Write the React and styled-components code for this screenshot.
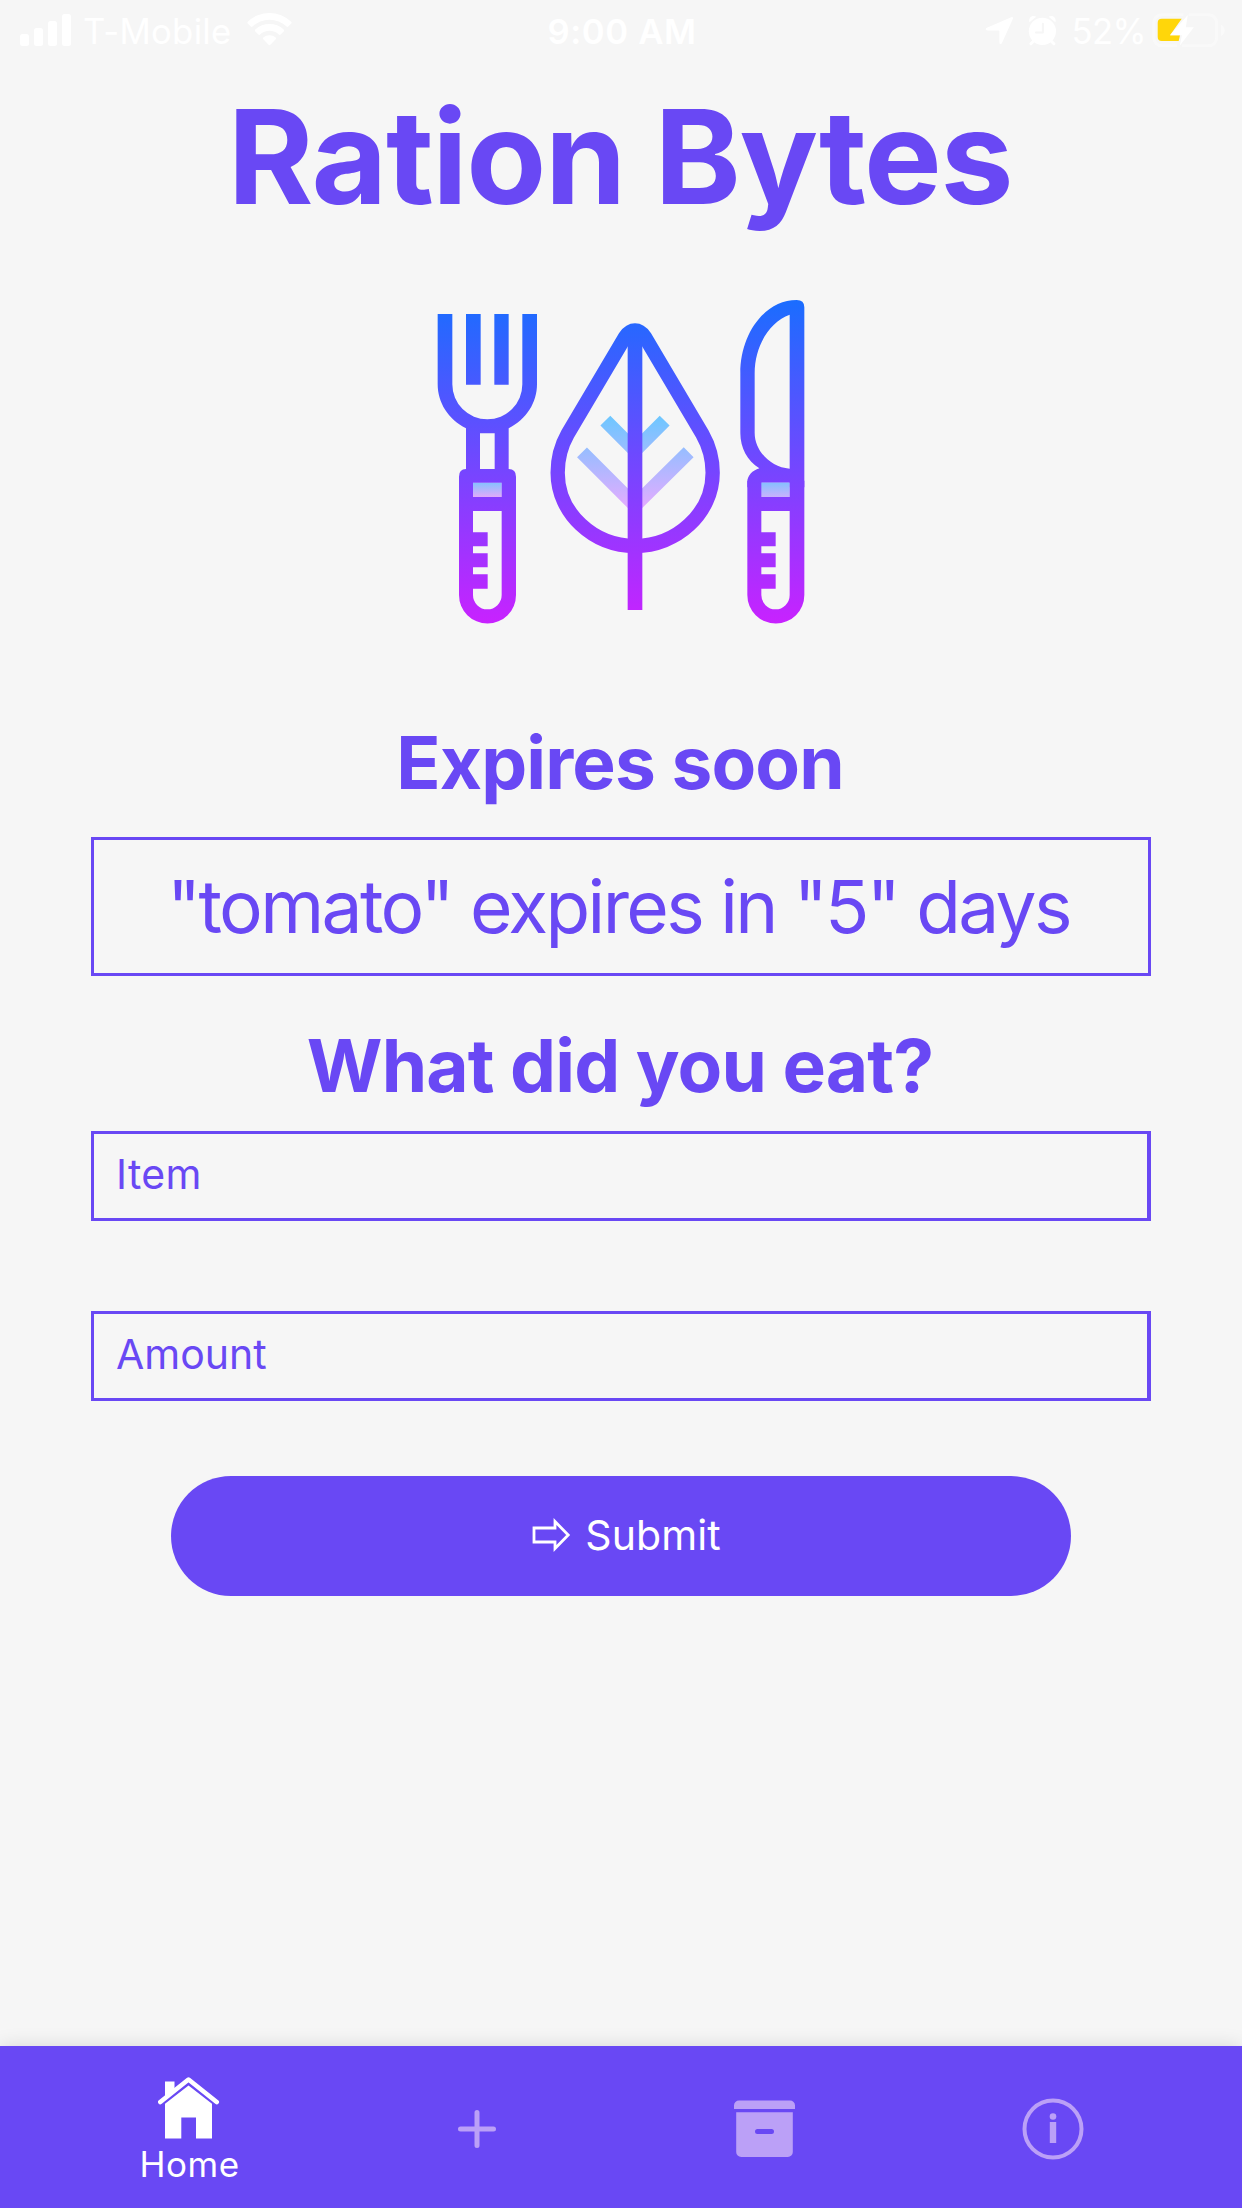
import React from "react";
import styled, { createGlobalStyle } from "styled-components";

const PURPLE = "#6948f4";
const PAPER = "#f6f6f6";

const GlobalStyle = createGlobalStyle`
  * { box-sizing: border-box; }
  body {
    margin: 0;
    background: ${PAPER};
    font-family: Inter, "Liberation Sans", sans-serif;
  }
`;

const Screen = styled.div`
  display: flex;
  flex-direction: column;
  width: 1242px;
  height: 2208px;
  overflow: hidden;
  background: ${PAPER};
  color: ${PURPLE};
`;

const StatusBar = styled.header`
  display: grid;
  grid-template-columns: 1fr auto 1fr;
  height: 60px;
  padding: 0 16px 0 20px;
  color: #fff;
`;

const StatusGroup = styled.div`
  display: flex;
  align-items: flex-start;
  justify-content: ${(p) => p.$align || "flex-start"};

  svg { display: block; flex: none; }
`;

const StatusIcons = styled.div`
  display: flex;
  gap: 14px;
`;

const StatusText = styled.span`
  padding-top: 1px;
  margin: ${(p) => p.$margin || 0};
  font-size: 34.7px;
  line-height: 60px;
  font-weight: ${(p) => p.$weight || 400};
  letter-spacing: ${(p) => p.$tracking || 0}px;
  white-space: nowrap;
`;

const Content = styled.main`
  display: flex;
  flex: 1;
  flex-direction: column;
  align-items: center;
  padding: 16px 91px 0;
`;

const Title = styled.h1`
  margin: 0 2px 0 0;
  font-size: 130.6px;
  line-height: 161px;
  font-weight: 700;
  letter-spacing: -1.4px;
  white-space: nowrap;
`;

const Logo = styled.svg`
  display: block;
  width: 400px;
  height: 360px;
  margin: 43px 2px 0 0;
`;

const SectionTitle = styled.h2`
  margin: ${(p) => p.$top}px 2px 0 0;
  font-size: 73px;
  line-height: 91px;
  font-weight: 700;
  letter-spacing: -0.86px;
  white-space: nowrap;
`;

const Notice = styled.p`
  display: flex;
  align-items: center;
  justify-content: center;
  width: 100%;
  height: 139px;
  margin: 29px 0 0;
  padding-right: 5px;
  border: 3px solid ${PURPLE};
  font-size: 73px;
  letter-spacing: -2.6px;
  white-space: nowrap;
`;

const Fields = styled.div`
  display: flex;
  flex-direction: column;
  gap: 90px;
  width: 100%;
  margin-top: 20px;
`;

const Field = styled.div`
  display: flex;
  align-items: center;
  height: 90px;
  padding: 0 22px 4px;
  border: 3px solid ${PURPLE};
  border-right-width: 4px;
  font-size: 41px;
  letter-spacing: ${(p) => p.$tracking || 0}px;
`;

const SubmitButton = styled.button`
  display: flex;
  align-items: center;
  justify-content: center;
  width: 900px;
  height: 120px;
  margin: 75px 0 0;
  padding: 0 0 2px;
  border: 0;
  border-radius: 60px;
  background: ${PURPLE};
  color: #fff;
  font: 400 41px Inter, "Liberation Sans", sans-serif;
  letter-spacing: 0.1px;
`;

const TabBar = styled.nav`
  display: flex;
  justify-content: center;
  height: 162px;
  padding: 0 45px;
  background: ${PURPLE};
  box-shadow: 0 0 18px rgba(0, 0, 0, 0.13);
`;

const Tab = styled.div`
  display: flex;
  flex: 1;
  flex-direction: column;
  align-items: center;
  justify-content: ${(p) => (p.$active ? "flex-start" : "center")};
  padding: ${(p) => (p.$active ? 31 : 4)}px 1px 0 0;
  color: ${(p) => (p.$active ? "#fff" : "#bba0f7")};

  svg { display: block; }
`;

const TabLabel = styled.span`
  margin: 4px 0 0 2px;
  font-size: 35px;
  line-height: 42px;
  letter-spacing: 0.5px;
`;

function SignalIcon() {
  return (
    <svg width="51" height="60" viewBox="20 0 51 60" fill="currentColor">
      <rect x="20" y="34" width="9" height="12" rx="2.5" />
      <rect x="34" y="28" width="9" height="18" rx="2.5" />
      <rect x="48" y="21" width="9" height="25" rx="2.5" />
      <rect x="62" y="14" width="9" height="32" rx="2.5" />
    </svg>
  );
}

function WifiIcon() {
  return (
    <svg width="45" height="60" viewBox="246.5 0 45 60" fill="currentColor">
      <path d="M247.3 21.8a31 31 0 0 1 43.4 0q.9.9 0 1.8l-3 3q-.8.8-1.7 0a24.5 24.5 0 0 0-34 0q-.9.8-1.7 0l-3-3q-.9-.9 0-1.8z" />
      <path d="M254.8 29.6a20.5 20.5 0 0 1 28.4 0q.9.9 0 1.8l-3.1 3.1q-.8.8-1.7 0a13.8 13.8 0 0 0-18.8 0q-.9.8-1.7 0l-3.1-3.1q-.9-.9 0-1.8z" />
      <path d="M262.8 37.4a9.6 9.6 0 0 1 12.4 0q1 .9 0 1.9l-5.3 5.400q-.9.9-1.800 0l-5.300-5.400q-1-1 0-1.900z" />
    </svg>
  );
}

function LocationIcon() {
  return (
    <svg width="29" height="60" viewBox="986 0 29 60" fill="currentColor">
      <path d="M1012.2 17.2c1.4-.6 2.3.4 1.6 1.8l-10.7 23.8c-.8 1.8-2.7 1.4-2.700-.4V31.200c0-.6-.2-.8-.8-.8h-11.200c-1.900 0-2.300-1.900-.5-2.700z" />
    </svg>
  );
}

function AlarmIcon() {
  return (
    <svg width="29" height="60" viewBox="1029.3 0 29 60" fill="none">
      <circle cx="1043.7" cy="31.3" r="13.6" fill="currentColor" />
      <path d="M1030.7 22.2c-1.5-4.2 3.2-8 6.8-5.4zM1056.7 22.2c1.5-4.2-3.2-8-6.8-5.4z" fill="currentColor" />
      <path d="M1035.5 40.5l-3.3 3.3M1051.9 40.5l3.3 3.3" stroke="currentColor" strokeWidth="3" strokeLinecap="round" />
      <path d="M1044.2 23.8v8.6h-7" stroke={PAPER} strokeWidth="2" strokeLinecap="round" strokeLinejoin="round" />
    </svg>
  );
}

function BatteryIcon() {
  return (
    <svg width="75" height="60" viewBox="1152 0 75 60" fill="none">
      <g stroke="#fff" strokeOpacity="0.4" strokeWidth="3">
        <path d="M1184.5 14.8h-21.7a8 8 0 0 0-8 8v15a8 8 0 0 0 8 8h15" />
        <path d="M1189.7 14.8h20a8 8 0 0 1 8 8v15a8 8 0 0 1-8 8h-26.5" />
      </g>
      <path d="M1222 24.8c5 2.4 5 9 0 11.4z" fill="#fff" fillOpacity="0.45" />
      <path d="M1162.7 18.7h20l-11.7 16.6h10l-1.3 5.7h-17a4 4 0 0 1-4-4v-14.3a4 4 0 0 1 4-4z" fill="#ffd60a" />
      <path d="M1188.8 15l-2 12.2h8.1l-14 18.3 2-10.2h-11.8z" fill="#fff" />
    </svg>
  );
}

function ForkHandle() {
  return (
    <g>
      <rect x="159" y="608" width="86" height="43" fill="url(#bandFork)" />
      <path
        fill="url(#brand)"
        fillRule="evenodd"
        d="M117 590q0-23 21-23h128q22 0 22 23v355a85.5 85.5 0 0 1-171 0zM159 608v43h86v-43zM159 693v64h44v42h-44v21h44v42h-44v21h44v43h-44v19a43 43 0 0 0 86 0v-252z"
      />
    </g>
  );
}

function BrandLogo() {
  return (
    <Logo viewBox="0 0 1200 1080" fill="none">
      <defs>
        <linearGradient id="brand" gradientUnits="userSpaceOnUse" x1="0" y1="60" x2="0" y2="1030">
          <stop offset="0" stopColor="#1a6dff" />
          <stop offset="1" stopColor="#c822ff" />
        </linearGradient>
        <linearGradient id="veins" gradientUnits="userSpaceOnUse" x1="0" y1="408" x2="0" y2="690">
          <stop offset="0" stopColor="#6dc7ff" />
          <stop offset="1" stopColor="#e6abff" />
        </linearGradient>
        <linearGradient id="bandFork" gradientUnits="userSpaceOnUse" x1="0" y1="608" x2="0" y2="651">
          <stop offset="0" stopColor="#86c0ff" />
          <stop offset="1" stopColor="#e0abfa" />
        </linearGradient>
        <linearGradient id="bandKnife" gradientUnits="userSpaceOnUse" x1="0" y1="608" x2="0" y2="651">
          <stop offset="0" stopColor="#86c0ff" />
          <stop offset="1" stopColor="#c9b1fd" />
        </linearGradient>
      </defs>

      <g fill="url(#brand)">
        <path
          fillRule="evenodd"
          d="M53 102h44v211a105 105 0 0 0 210 0V102h44v210c0 56-32 106-85 133v125H138V445C85 418 53 368 53 312zM180 460v108h44V460z"
        />
        <path d="M138 102h44v212h-44zM223 102h43v212h-43z" />
      </g>
      <ForkHandle />

      <g stroke="url(#veins)" strokeWidth="42">
        <path d="M556 422l89 89 89-89" />
        <path d="M486 517l159 159 161-159" />
      </g>
      <path
        d="M645 151C631 151 624 158 616 170L443 462C422 499 413 537 413 578C413 700 520 798 645 798S878 700 878 578C878 537 868 499 847 462L674 170C666 158 659 151 645 151z"
        stroke="url(#brand)"
        strokeWidth="43"
      />
      <path d="M623 165h44v825h-44z" fill="url(#brand)" />

      <path
        fill="url(#brand)"
        fillRule="evenodd"
        d="M1130 60q23 0 23 22v540H982v-17c0-17 15-34 36-40-36-22-57-62-57-106V280C961 160 1035 60 1130 60zM1109 104C1050 125 1004 196 1004 280v178c0 55 48 104 105 108zM1024 608v14h85v-14z"
      />
      <rect x="1023" y="608" width="86" height="43" fill="url(#bandKnife)" />
      <path
        fill="url(#brand)"
        fillRule="evenodd"
        d="M982 602h42v49h85v-49h44v343a85.5 85.5 0 0 1-171 0zM1024 693v64h43v42h-43v21h43v42h-43v21h43v43h-43v19a42.5 43 0 0 0 85 0v-252z"
      />
    </Logo>
  );
}

function ArrowIcon() {
  return (
    <svg width="64" height="46" viewBox="0 0 64 46" fill="none" stroke="currentColor" strokeWidth="2.8">
      <path d="M13 16h21V9.500L47.200 23 34 36.500V30H13z" />
    </svg>
  );
}

function HomeIcon() {
  return (
    <svg width="62" height="62" viewBox="0 0 62 62" fill="currentColor">
      <path fillRule="evenodd" d="M7 26.700L30.500 8.500 54 26.700V61.500H38V40.500H23.300V61.500H7z" />
      <path d="M7 4.500h9.500v9L7 21z" />
      <path d="M2.300 25L30.500 2.500 58.700 25" fill="none" stroke="currentColor" strokeWidth="4.600" strokeLinecap="round" strokeLinejoin="round" />
    </svg>
  );
}

function PlusIcon() {
  return (
    <svg width="38" height="38" viewBox="0 0 38 38" stroke="currentColor" strokeWidth="5" strokeLinecap="round">
      <path d="M19 2.5v33M2.5 19h33" />
    </svg>
  );
}

function ArchiveIcon() {
  return (
    <svg width="61" height="62" viewBox="0 0 61 62" fill="currentColor">
      <path d="M0 11V7.5a5 5 0 0 1 5-5h51a5 5 0 0 1 5 5V11z" />
      <path fillRule="evenodd" d="M2.2 14.3h56.6V54a5 5 0 0 1-5 5H7.2a5 5 0 0 1-5-5zM23.5 31a2.5 2.5 0 0 0 0 5h14a2.5 2.5 0 0 0 0-5z" />
    </svg>
  );
}

function InfoIcon() {
  return (
    <svg width="62" height="62" viewBox="0 0 62 62" fill="currentColor">
      <circle cx="31" cy="31" r="28.5" fill="none" stroke="currentColor" strokeWidth="4" />
      <circle cx="31" cy="18.5" r="3.3" />
      <rect x="27.8" y="24" width="6.4" height="21" />
    </svg>
  );
}

export default function App() {
  return (
    <Screen>
      <GlobalStyle />
      <StatusBar>
        <StatusGroup>
          <SignalIcon />
          <StatusText $margin="0 15px 0 12px" $tracking={0.3}>T-Mobile</StatusText>
          <WifiIcon />
        </StatusGroup>
        <StatusText $margin="0 2px 0 0" $weight={600} $tracking={0.6}>9:00 AM</StatusText>
        <StatusGroup $align="flex-end">
          <StatusIcons>
            <LocationIcon />
            <AlarmIcon />
          </StatusIcons>
          <StatusText $margin="0 5px 0 14px" $tracking={-0.6}>52%</StatusText>
          <BatteryIcon />
        </StatusGroup>
      </StatusBar>

      <Content>
        <Title>Ration Bytes</Title>
        <BrandLogo />
        <SectionTitle $top={77}>Expires soon</SectionTitle>
        <Notice>"tomato" expires in "5" days</Notice>
        <SectionTitle $top={44}>What did you eat?</SectionTitle>
        <Fields>
          <Field $tracking={0.3}>Item</Field>
          <Field>Amount</Field>
        </Fields>
        <SubmitButton>
          <ArrowIcon />
          Submit
        </SubmitButton>
      </Content>

      <TabBar>
        <Tab $active>
          <HomeIcon />
          <TabLabel>Home</TabLabel>
        </Tab>
        <Tab><PlusIcon /></Tab>
        <Tab><ArchiveIcon /></Tab>
        <Tab><InfoIcon /></Tab>
      </TabBar>
    </Screen>
  );
}
